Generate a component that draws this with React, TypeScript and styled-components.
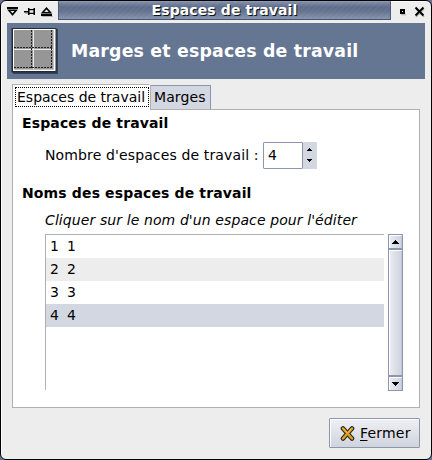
import React from "react";
import styled, { createGlobalStyle, css } from "styled-components";

const Global = createGlobalStyle`
  * { box-sizing: border-box; }
  html, body { margin: 0; padding: 0; background: #647593; }
  body { font: 14px/20px "DejaVu Sans", sans-serif; color: #000; overflow: hidden; }
`;

const Window = styled.div`
  width: 432px;
  height: 460px;
  border: 1px solid #000;
  border-radius: 6px;
  background: #ededed;
  display: flex;
  flex-direction: column;
  box-shadow: inset 1px 1px 0 #fafafa;
`;

const TitleBar = styled.div`
  height: 22px;
  flex: none;
  display: flex;
  align-items: flex-start;
`;

const Controls = styled.svg`
  display: block;
  flex: none;
`;

const Title = styled.div`
  width: 333px;
  height: 19px;
  border: 1px solid #4d5a78;
  border-top: 1px solid #8b99b4;
  border-bottom: 1px solid #49566f;
  background:
    repeating-linear-gradient(135deg, rgba(255, 255, 255, 0.03) 0 2px, transparent 2px 4px),
    linear-gradient(#7d8ba6 0, #5d6c8a 30%, #64738f 55%, #8593ac 100%);
  color: #fff;
  font-weight: bold;
  font-size: 14px;
  letter-spacing: 0.1px;
  line-height: 17px;
  text-align: center;
  text-shadow: 1px 1px 0 #111;
  white-space: nowrap;
`;

const Header = styled.header`
  margin: 0 6px;
  height: 56px;
  flex: none;
  background: #657693;
  display: flex;
  padding: 4px;
  gap: 13px;
`;

const Heading = styled.h1`
  margin: 0;
  color: #fff;
  font-size: 17.33px;
  letter-spacing: 0.19px;
  line-height: 48px;
  white-space: nowrap;
`;

const Tabs = styled.div`
  display: flex;
  align-items: flex-end;
  height: 26px;
  margin: 5px 0 -1px 11px;
  flex: none;
  z-index: 1;
`;

const Tab = styled.div<{ $active?: boolean }>`
  white-space: nowrap;
  border: 1px solid #8c97ad;
  ${(p) =>
    p.$active
      ? css`
          width: 138px;
          height: 26px;
          padding: 2px;
          background: #fff;
          border-color: #b0b0b0;
          border-right-color: #fff;
          border-bottom: 0;
        `
      : css`
          width: 61px;
          height: 25px;
          padding: 1px 0 0 3px;
          background: #d3d7e1;
          border-left-color: #b0b0b0;
          border-bottom-color: #b0b0b0;
          letter-spacing: 0.1px;
        `}
`;

const Focus = styled.span`
  display: block;
  width: 134px;
  height: 20px;
  border: 1px dotted #000;
  padding-left: 1px;
  line-height: 18px;
`;

const Panel = styled.main`
  width: 408px;
  height: 299px;
  margin-left: 11px;
  border: 1px solid #b0b0b0;
  background: #fff;
  padding: 3px 0 0 9px;
  flex: none;
`;

const SectionTitle = styled.h2`
  margin: 0;
  font-size: 14px;
  letter-spacing: 0.14px;
  line-height: 20px;
  white-space: nowrap;
`;

const Field = styled.div`
  margin: 9px 0 14px 23px;
  height: 27px;
  display: flex;
  line-height: 27px;
  white-space: nowrap;
`;

const FieldLabel = styled.span`
  width: 218px;
  letter-spacing: 0.13px;
`;

const Entry = styled.span`
  width: 40px;
  border: 1px solid #8c97ad;
  border-radius: 1px;
  padding-left: 4px;
  line-height: 25px;
`;

const Hint = styled.p`
  margin: 7px 0 4px 23px;
  font-style: italic;
  letter-spacing: 0.1px;
  white-space: nowrap;
`;

const ListArea = styled.div`
  margin-left: 23px;
  display: flex;
  gap: 4px;
  height: 157px;
`;

const List = styled.div`
  width: 339px;
  height: 156px;
  border-left: 1px solid #b0b0b0;
  border-top: 1px solid #b0b0b0;
`;

const Row = styled.div<{ $tone: string }>`
  height: 23px;
  display: grid;
  grid-template-columns: 17px 1fr;
  padding-left: 4px;
  line-height: 23px;
  background: ${(p) => p.$tone};
`;

const Scrollbar = styled.div`
  width: 15px;
  height: 157px;
  border: 1px solid #8c97ad;
  display: flex;
  flex-direction: column;
`;

const metal = css`
  background: linear-gradient(90deg, #eceef3, #cdd1dc);
  box-shadow: inset 1px 1px 0 #fff, inset -1px 0 0 #c0c7d5;
`;

const Arrow = styled.div`
  ${metal}
  height: 13px;
  display: flex;
  justify-content: center;
  align-items: center;
  flex: none;
`;

const Thumb = styled.div`
  ${metal}
  flex: 1;
  border-top: 2px solid #8c97ad;
  border-bottom: 2px solid #8c97ad;
`;

const Footer = styled.footer`
  display: flex;
  justify-content: flex-end;
  padding: 10px 11px 0 0;
`;

const CloseButton = styled.button`
  width: 91px;
  height: 30px;
  border: 1px solid #8c97ad;
  border-radius: 1px;
  padding: 0 0 0 10px;
  display: flex;
  align-items: center;
  gap: 5px;
  font: inherit;
  letter-spacing: 0.2px;
  color: #000;
  background: linear-gradient(#eff0f4, #cfd3dd);
  box-shadow: inset 1px 1px 0 #fff;
  white-space: nowrap;
`;

const Mnemonic = styled.span`
  text-decoration: underline;
  text-decoration-thickness: 1px;
  text-underline-offset: 2px;
`;

const LeftControls = () => (
  <Controls width="57" height="22" viewBox="1 1 57 22">
    <path d="M9 10.500l3.500 5.500 4-5.500M25 13.500h10M42 16.500h11" fill="none" stroke="#b4b4b4" />
    <path d="M7 7h11v2H7z" />
    <path d="M8.800 10.200h7.400L12.500 14.500z" fill="#ededed" stroke="#000" strokeWidth="1.600" />
    <path d="M24 11h5v1.400h-5zM28 8h1.500v7H28zM33.500 8H35v7h-1.500z" />
    <path d="M29 9.700h5v3.600h-5z" fill="#ededed" stroke="#000" strokeWidth="1.200" />
    <path d="M42.500 12.800h8L46.500 8.300z" fill="#ededed" stroke="#000" strokeWidth="1.600" />
    <path d="M41 14h11v2H41z" />
  </Controls>
);

const RightControls = () => (
  <Controls width="39" height="22" viewBox="391 1 39 22">
    <path d="M401 14.500h5M416 9l8 8M424 9l-8 8" stroke="#b8b8b8" strokeWidth="1.500" />
    <path d="M401 10h3v3h-3z" fill="#fff" stroke="#000" strokeWidth="2" />
    <path d="M415.500 7.500l8 8M423.500 7.500l-8 8" stroke="#000" strokeWidth="2" />
  </Controls>
);

const WorkspaceIcon = () => (
  <Controls width="47" height="47" viewBox="0 0 47 47">
    <path d="M2 2h45v45H2z" fill="#33435b" />
    <path d="M0.500 1h45v44.500h-45z" fill="#252b31" />
    <path d="M2 2h42.500v42H2z" fill="#fff" />
    <path d="M3 3h40v40H3z" fill="#969696" />
    <path d="M22.500 3v40M3 22.500h40" stroke="#e9e9e9" />
    <path d="M20.500 3v40M40.500 3v40M3 20.500h40M3 40.500h40" stroke="#222" strokeDasharray="2 1" />
    <path d="M42.500 3v40M3 42.500h40" stroke="#c4c4c4" />
  </Controls>
);

const SpinArrows = () => (
  <Controls width="14" height="27" viewBox="0 0 14 27" shapeRendering="crispEdges">
    <path d="M0 0h14v27H0z" fill="#d3d7e1" />
    <path d="M6 6h1v1h1v1h1v1H4V8h1V7h1zM4 17h5v1H8v1H7v1H6v-1H5v-1H4z" />
  </Controls>
);

const Triangle = ({ down }: { down?: boolean }) => (
  <Controls width="7" height="4" viewBox="0 0 7 4" shapeRendering="crispEdges">
    <path d={down ? "M0 0h7v1H6v1H5v1H4v1H3V3H2V2H1V1H0z" : "M3 0h1v1h1v1h1v1h1v1H0V3h1V2h1V1h1z"} />
  </Controls>
);

const CrossIcon = () => (
  <Controls width="15" height="15" viewBox="0 0 15 15">
    <path d="M3 2.500L12 12.500M12 2.500L3 12.500" stroke="#29251a" strokeWidth="4.600" strokeLinecap="round" />
    <path d="M3 2.500L12 12.500M12 2.500L3 12.500" stroke="#dfa022" strokeWidth="2.500" strokeLinecap="round" />
    <path d="M3 2.300L7 6.500M11.500 2.500L8 6.500" stroke="#f2c86b" strokeWidth="1" />
  </Controls>
);

const tones = ["#fff", "#ededed", "#fff", "#d3d7e1"];

export default function App() {
  return (
    <>
      <Global />
      <Window>
        <TitleBar>
          <LeftControls />
          <Title>Espaces de travail</Title>
          <RightControls />
        </TitleBar>
        <Header>
          <WorkspaceIcon />
          <Heading>Marges et espaces de travail</Heading>
        </Header>
        <Tabs>
          <Tab $active>
            <Focus>Espaces de travail</Focus>
          </Tab>
          <Tab>Marges</Tab>
        </Tabs>
        <Panel>
          <SectionTitle>Espaces de travail</SectionTitle>
          <Field>
            <FieldLabel>Nombre d'espaces de travail :</FieldLabel>
            <Entry>4</Entry>
            <SpinArrows />
          </Field>
          <SectionTitle>Noms des espaces de travail</SectionTitle>
          <Hint>Cliquer sur le nom d'un espace pour l'éditer</Hint>
          <ListArea>
            <List>
              {tones.map((tone, i) => (
                <Row key={i} $tone={tone}>
                  <span>{i + 1}</span>
                  <span>{i + 1}</span>
                </Row>
              ))}
            </List>
            <Scrollbar>
              <Arrow>
                <Triangle />
              </Arrow>
              <Thumb />
              <Arrow>
                <Triangle down />
              </Arrow>
            </Scrollbar>
          </ListArea>
        </Panel>
        <Footer>
          <CloseButton>
            <CrossIcon />
            <span>
              <Mnemonic>F</Mnemonic>ermer
            </span>
          </CloseButton>
        </Footer>
      </Window>
    </>
  );
}
